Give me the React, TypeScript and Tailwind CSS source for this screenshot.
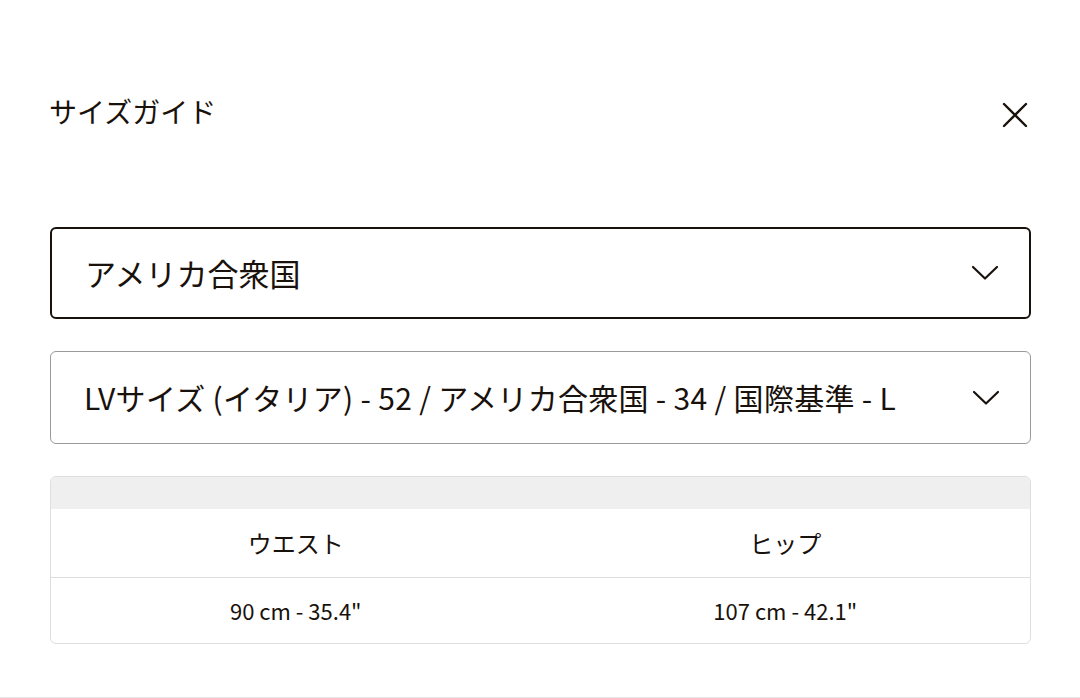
import React from "react";

const font = { fontFamily: '"Noto Sans CJK JP", "Noto Sans", sans-serif' };

function Chevron() {
  return (
    <svg width="28" height="28" viewBox="0 0 28 28" fill="none" className="shrink-0">
      <polyline points="2,8 14,19.5 26,8" stroke="#19110b" strokeWidth="2.2" strokeLinecap="round" strokeLinejoin="round" />
    </svg>
  );
}

function CloseIcon() {
  return (
    <svg width="26" height="26" viewBox="0 0 26 26" fill="none">
      <path d="M2 2 L24 24 M24 2 L2 24" stroke="#19110b" strokeWidth="2.4" strokeLinecap="round" />
    </svg>
  );
}

export default function App() {
  const rows = [
    ["ウエスト", "ヒップ"],
    ['90 cm - 35.4"', '107 cm - 42.1"'],
  ];
  return (
    <div className="w-[1080px] h-[698px] bg-white text-[#19110b] border-b border-[#e6e6e6] overflow-hidden" style={font}>
      <div className="pl-[50px] pr-[49px]">
        <div className="flex justify-between pt-[90px] h-[140px] items-start">
          <div className="text-[28px] leading-[42px] -ml-[1px]">サイズガイド</div>
          <div className="mt-[12px] mr-[3px]"><CloseIcon /></div>
        </div>

        <div className="mt-[87px] h-[92px] border-2 border-[#19110b] rounded-[6px] flex items-center justify-between pl-[33px] pr-[30px]">
          <span className="text-[31px]">アメリカ合衆国</span>
          <Chevron />
        </div>

        <div className="mt-[32px] h-[93px] border border-[#9a9a9a] rounded-[6px] flex items-center justify-between pl-[33px] pr-[30px]">
          <span className="text-[30px] tracking-[0.3px]">LVサイズ (イタリア) - 52 / アメリカ合衆国 - 34 / 国際基準 - L</span>
          <Chevron />
        </div>

        <div className="mt-[32px] border border-[#dedede] rounded-[6px] overflow-hidden">
          <div className="h-[32px] bg-[#efefef]" />
          <div className="grid grid-cols-2 h-[69px] items-center text-center text-[24px] border-b border-[#dedede]">
            <div>{rows[0][0]}</div>
            <div>{rows[0][1]}</div>
          </div>
          <div className="grid grid-cols-2 h-[65px] items-center text-center text-[22px]">
            <div>{rows[1][0]}</div>
            <div>{rows[1][1]}</div>
          </div>
        </div>
      </div>
    </div>
  );
}
